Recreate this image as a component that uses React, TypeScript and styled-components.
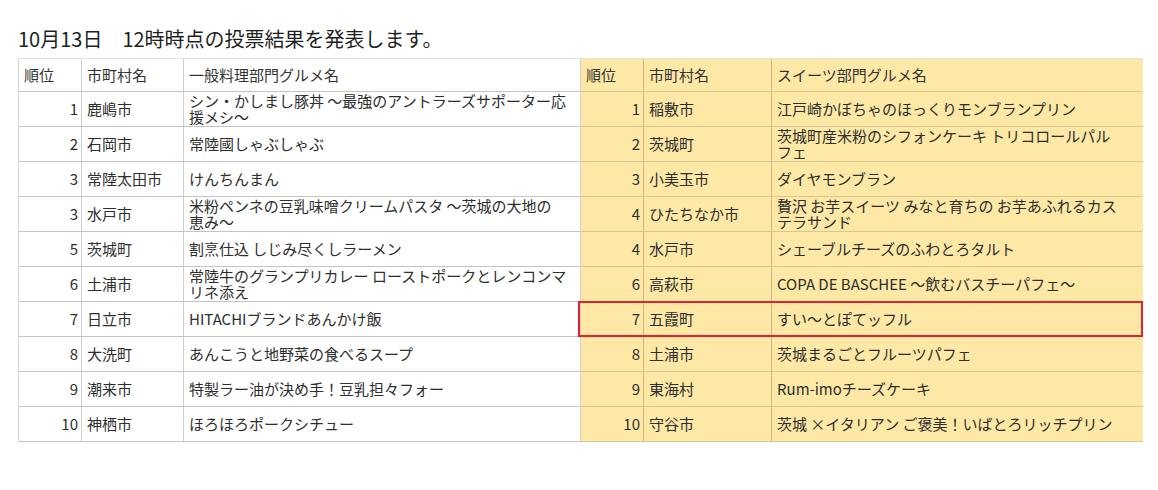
import * as React from 'react';
import styled, { createGlobalStyle } from 'styled-components';

const GlobalStyle = createGlobalStyle`
  body {
    margin: 0;
    background: #ffffff;
    font-family: "Noto Sans CJK JP", "Noto Sans", sans-serif;
    color: #2b2b2b;
  }
`;

const Page = styled.div`
  padding: 27px 16px 0 18px;
`;

const Title = styled.h1`
  margin: 0 0 7px 0;
  font-size: 20px;
  line-height: 24px;
  font-weight: 400;
  color: #1f1f1f;
`;

const Table = styled.div`
  width: 1124px;
  display: flex;
  flex-direction: column;
  border-top: 1px solid #e2e2e2;
  border-left: 1px solid #d4d4d4;
`;

const Row = styled.div<{ $header?: boolean }>`
  display: flex;
  height: ${({ $header }) => ($header ? '33px' : '35px')};
`;

const Half = styled.div<{ $sweet?: boolean; $highlight?: boolean }>`
  position: relative;
  display: grid;
  grid-template-columns: ${({ $sweet }) => ($sweet ? '63px 128px 1fr' : '63px 102px 1fr')};
  width: 562px;
  background: ${({ $sweet }) => ($sweet ? '#fde8a6' : '#ffffff')};

  &::after {
    content: '';
    display: ${({ $highlight }) => ($highlight ? 'block' : 'none')};
    position: absolute;
    inset: -1px 0 0 -3px;
    border: 2px solid #e3202f;
    pointer-events: none;
  }
`;

const Cell = styled.div<{ $sweet?: boolean; $num?: boolean; $last?: boolean }>`
  display: flex;
  align-items: center;
  justify-content: ${({ $num }) => ($num ? 'flex-end' : 'flex-start')};
  padding: ${({ $num }) => ($num ? '0 3px 0 4px' : '0 4px 0 5px')};
  border-bottom: 1px solid ${({ $sweet }) => ($sweet ? '#d8c690' : '#c4c4c4')};
  border-right: ${({ $sweet, $last }) =>
    $last ? 'none' : `1px solid ${$sweet ? '#cdb67d' : '#cfcfcf'}`};
  font-size: 15px;
  line-height: 16px;
  white-space: pre-line;
  color: #2e2e2e;
`;

const HeadCell = styled(Cell)`
  justify-content: flex-start;
  padding: 0 4px 0 5px;
`;

const HeadLabel = styled.span`
  color: #333333;
`;

type Entry = { rank: number; city: string; name: string };

const general: Entry[] = [
  { rank: 1, city: '鹿嶋市', name: 'シン・かしまし豚丼 ～最強のアントラーズサポーター応\n援メシ～' },
  { rank: 2, city: '石岡市', name: '常陸國しゃぶしゃぶ' },
  { rank: 3, city: '常陸太田市', name: 'けんちんまん' },
  { rank: 3, city: '水戸市', name: '米粉ペンネの豆乳味噌クリームパスタ ～茨城の大地の\n恵み～' },
  { rank: 5, city: '茨城町', name: '割烹仕込 しじみ尽くしラーメン' },
  { rank: 6, city: '土浦市', name: '常陸牛のグランプリカレー ローストポークとレンコンマ\nリネ添え' },
  { rank: 7, city: '日立市', name: 'HITACHIブランドあんかけ飯' },
  { rank: 8, city: '大洗町', name: 'あんこうと地野菜の食べるスープ' },
  { rank: 9, city: '潮来市', name: '特製ラー油が決め手！豆乳担々フォー' },
  { rank: 10, city: '神栖市', name: 'ほろほろポークシチュー' },
];

const sweets: Entry[] = [
  { rank: 1, city: '稲敷市', name: '江戸崎かぼちゃのほっくりモンブランプリン' },
  { rank: 2, city: '茨城町', name: '茨城町産米粉のシフォンケーキ トリコロールパル\nフェ' },
  { rank: 3, city: '小美玉市', name: 'ダイヤモンブラン' },
  { rank: 4, city: 'ひたちなか市', name: '贅沢 お芋スイーツ みなと育ちの お芋あふれるカス\nテラサンド' },
  { rank: 4, city: '水戸市', name: 'シェーブルチーズのふわとろタルト' },
  { rank: 6, city: '高萩市', name: 'COPA DE BASCHEE ～飲むバスチーパフェ～' },
  { rank: 7, city: '五霞町', name: 'すい～とぽてッフル' },
  { rank: 8, city: '土浦市', name: '茨城まるごとフルーツパフェ' },
  { rank: 9, city: '東海村', name: 'Rum-imoチーズケーキ' },
  { rank: 10, city: '守谷市', name: '茨城 ×イタリアン ご褒美！いばとろリッチプリン' },
];

const HIGHLIGHT_ROW = 6;

const App = () => (
  <Page>
    <GlobalStyle />
    <Title>10月13日　12時時点の投票結果を発表します。</Title>
    <Table>
      <Row $header>
        <Half>
          <HeadCell><HeadLabel>順位</HeadLabel></HeadCell>
          <HeadCell><HeadLabel>市町村名</HeadLabel></HeadCell>
          <HeadCell><HeadLabel>一般料理部門グルメ名</HeadLabel></HeadCell>
        </Half>
        <Half $sweet>
          <HeadCell $sweet><HeadLabel>順位</HeadLabel></HeadCell>
          <HeadCell $sweet><HeadLabel>市町村名</HeadLabel></HeadCell>
          <HeadCell $sweet $last><HeadLabel>スイーツ部門グルメ名</HeadLabel></HeadCell>
        </Half>
      </Row>
      {general.map((g, i) => {
        const s = sweets[i];
        return (
          <Row key={i}>
            <Half>
              <Cell $num>{g.rank}</Cell>
              <Cell>{g.city}</Cell>
              <Cell>{g.name}</Cell>
            </Half>
            <Half $sweet $highlight={i === HIGHLIGHT_ROW}>
              <Cell $sweet $num>{s.rank}</Cell>
              <Cell $sweet>{s.city}</Cell>
              <Cell $sweet $last>{s.name}</Cell>
            </Half>
          </Row>
        );
      })}
    </Table>
  </Page>
);

export default App;
